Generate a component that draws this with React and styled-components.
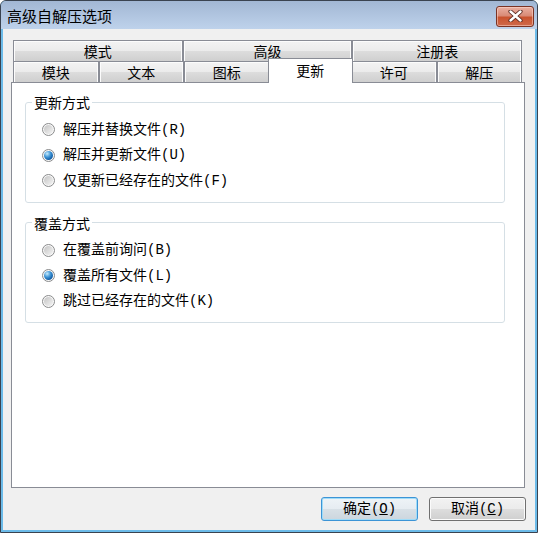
import styled, { createGlobalStyle, css } from "styled-components";

const GlobalStyle = createGlobalStyle`
  html, body {
    margin: 0;
    padding: 0;
    background: #ffffff;
  }
  body {
    font-family: "Liberation Mono", "Noto Sans CJK SC", monospace;
    font-size: 14px;
    line-height: 16px;
    color: #000;
  }
`;

const Window = styled.div`
  box-sizing: border-box;
  width: 538px;
  height: 533px;
  border: 1px solid #3a4350;
  border-radius: 6px 6px 0 0;
  background: #6cbbe9;
  display: flex;
  flex-direction: column;
  overflow: hidden;
`;

const TitleBar = styled.div`
  flex: none;
  height: 28px;
  box-sizing: border-box;
  padding: 2px 3px 0 6px;
  display: flex;
  align-items: center;
  justify-content: space-between;
  background: linear-gradient(#a2b7d4, #bed2eb);
`;

const Title = styled.span`
  font-family: "Noto Sans CJK SC", sans-serif;
  font-size: 15px;
  line-height: 18px;
`;

const CloseButton = styled.div`
  width: 38px;
  height: 21px;
  box-sizing: border-box;
  border: 1px solid #7b3324;
  border-radius: 3px;
  background: linear-gradient(#eab0a2 0%, #d98b77 45%, #c9532f 55%, #cf6a4b 100%);
  box-shadow: inset 0 0 0 1px rgba(255, 220, 210, 0.5);
  display: flex;
  align-items: center;
  justify-content: center;
`;

const Client = styled.div`
  flex: 1;
  margin: 0 2px 2px;
  background: #f0f0f0;
  padding: 11px 8px 0 8px;
  display: flex;
  flex-direction: column;
`;

const TabStrip = styled.div`
  margin-left: 2px;
  width: 509px;
`;

const TabRow = styled.div`
  display: flex;
  height: 21px;
`;

const Tab = styled.div`
  flex: 1;
  box-sizing: border-box;
  border: 1px solid #898c95;
  border-bottom: none;
  background: linear-gradient(#f3f3f3 0%, #ebebeb 50%, #dddddd 50%, #cfcfcf 100%);
  box-shadow: inset 1px 1px 0 #fcfcfc, inset -1px 0 0 #fcfcfc;
  display: flex;
  align-items: center;
  justify-content: center;
  font-family: "Noto Sans CJK SC", sans-serif;
  font-size: 14px;
  line-height: 16px;

  ${(p) =>
    p.$selected &&
    css`
      position: relative;
      z-index: 1;
      margin: -3px -2px -1px;
      background: #ffffff;
      box-shadow: none;
      padding-bottom: 2px;
    `}
`;

const Panel = styled.div`
  box-sizing: border-box;
  width: 514px;
  height: 406px;
  border: 1px solid #898c95;
  background: #ffffff;
  padding: 0 19px 0 13px;
`;

const GroupBox = styled.fieldset`
  margin: ${(p) => p.$top}px 0 0;
  padding: 0;
  border: 1px solid #d5dfe5;
  border-radius: 3px;
  min-width: 0;
`;

const Legend = styled.legend`
  margin-left: 6px;
  padding: 0 2px;
  font-family: "Noto Sans CJK SC", sans-serif;
  font-size: 14px;
  line-height: 16px;
`;

const RadioList = styled.div`
  padding: 7px 0 8px 16px;
`;

const RadioRow = styled.label`
  height: 25.5px;
  display: flex;
  align-items: center;
  gap: 8px;
  white-space: nowrap;
`;

const RadioDot = styled.span`
  flex: none;
  position: relative;
  width: 13px;
  height: 13px;
  box-sizing: border-box;
  border-radius: 50%;
  border: 1px solid #8a8b8c;
  background: #f8f8f8;

  &::before {
    content: "";
    position: absolute;
    left: 1px;
    top: 1px;
    width: 9px;
    height: 9px;
    border-radius: 50%;
    background: linear-gradient(135deg, #c4c4c4, #f4f4f4);
  }

  ${(p) =>
    p.$checked &&
    css`
      &::before {
        background: radial-gradient(circle at 35% 30%, #c6ebfd 0%, #3f95d6 40%, #1560a8 70%, #0b3d74 100%);
      }
    `}
`;

const ButtonRow = styled.div`
  display: flex;
  justify-content: flex-end;
  gap: 11px;
  margin-top: 9px;
  padding-right: 1px;
`;

const Button = styled.div`
  width: 97px;
  height: 24px;
  box-sizing: border-box;
  border: 1px solid #707070;
  border-radius: 3px;
  background: linear-gradient(#f2f2f2 0%, #ebebeb 50%, #dddddd 50%, #cfcfcf 100%);
  box-shadow: inset 0 0 0 1px #fbfbfb;
  display: flex;
  align-items: center;
  justify-content: center;
  font-size: 14px;
  line-height: 16px;

  ${(p) =>
    p.$default &&
    css`
      border-color: #3c94d6;
      background: linear-gradient(#eef3f7 0%, #e6ecf1 50%, #d8e0e6 50%, #ccd6de 100%);
      box-shadow: inset 0 0 0 1px #9fdcf8;
    `}
`;

const Key = styled.u`
  text-underline-offset: 1px;
`;

const groups = [
  {
    title: "更新方式",
    top: 11,
    options: [
      { label: "解压并替换文件(R)" },
      { label: "解压并更新文件(U)", checked: true },
      { label: "仅更新已经存在的文件(F)" },
    ],
  },
  {
    title: "覆盖方式",
    top: 12,
    options: [
      { label: "在覆盖前询问(B)" },
      { label: "覆盖所有文件(L)", checked: true },
      { label: "跳过已经存在的文件(K)" },
    ],
  },
];

const backTabs = ["模式", "高级", "注册表"];
const frontTabs = ["模块", "文本", "图标", "更新", "许可", "解压"];

const App = () => {
  return (
    <>
      <GlobalStyle />
      <Window>
        <TitleBar>
          <Title>高级自解压选项</Title>
          <CloseButton>
            <svg width="15" height="12" viewBox="0 0 15 12">
              <path d="M2.5 1.5 L12.5 10.5 M12.5 1.5 L2.5 10.5" stroke="#5a2a22" strokeWidth="4.2" strokeLinecap="round" />
              <path d="M2.5 1.5 L12.5 10.5 M12.5 1.5 L2.5 10.5" stroke="#ffffff" strokeWidth="2.4" strokeLinecap="round" />
            </svg>
          </CloseButton>
        </TitleBar>
        <Client>
          <TabStrip>
            <TabRow>
              {backTabs.map((t) => (
                <Tab key={t}>{t}</Tab>
              ))}
            </TabRow>
            <TabRow>
              {frontTabs.map((t) => (
                <Tab key={t} $selected={t === "更新"}>
                  {t}
                </Tab>
              ))}
            </TabRow>
          </TabStrip>
          <Panel>
            {groups.map((g) => (
              <GroupBox key={g.title} $top={g.top}>
                <Legend>{g.title}</Legend>
                <RadioList>
                  {g.options.map((o) => (
                    <RadioRow key={o.label}>
                      <RadioDot $checked={o.checked} />
                      <span>{o.label}</span>
                    </RadioRow>
                  ))}
                </RadioList>
              </GroupBox>
            ))}
          </Panel>
          <ButtonRow>
            <Button $default>
              确定(<Key>O</Key>)
            </Button>
            <Button>
              取消(<Key>C</Key>)
            </Button>
          </ButtonRow>
        </Client>
      </Window>
    </>
  );
};

export default App;
